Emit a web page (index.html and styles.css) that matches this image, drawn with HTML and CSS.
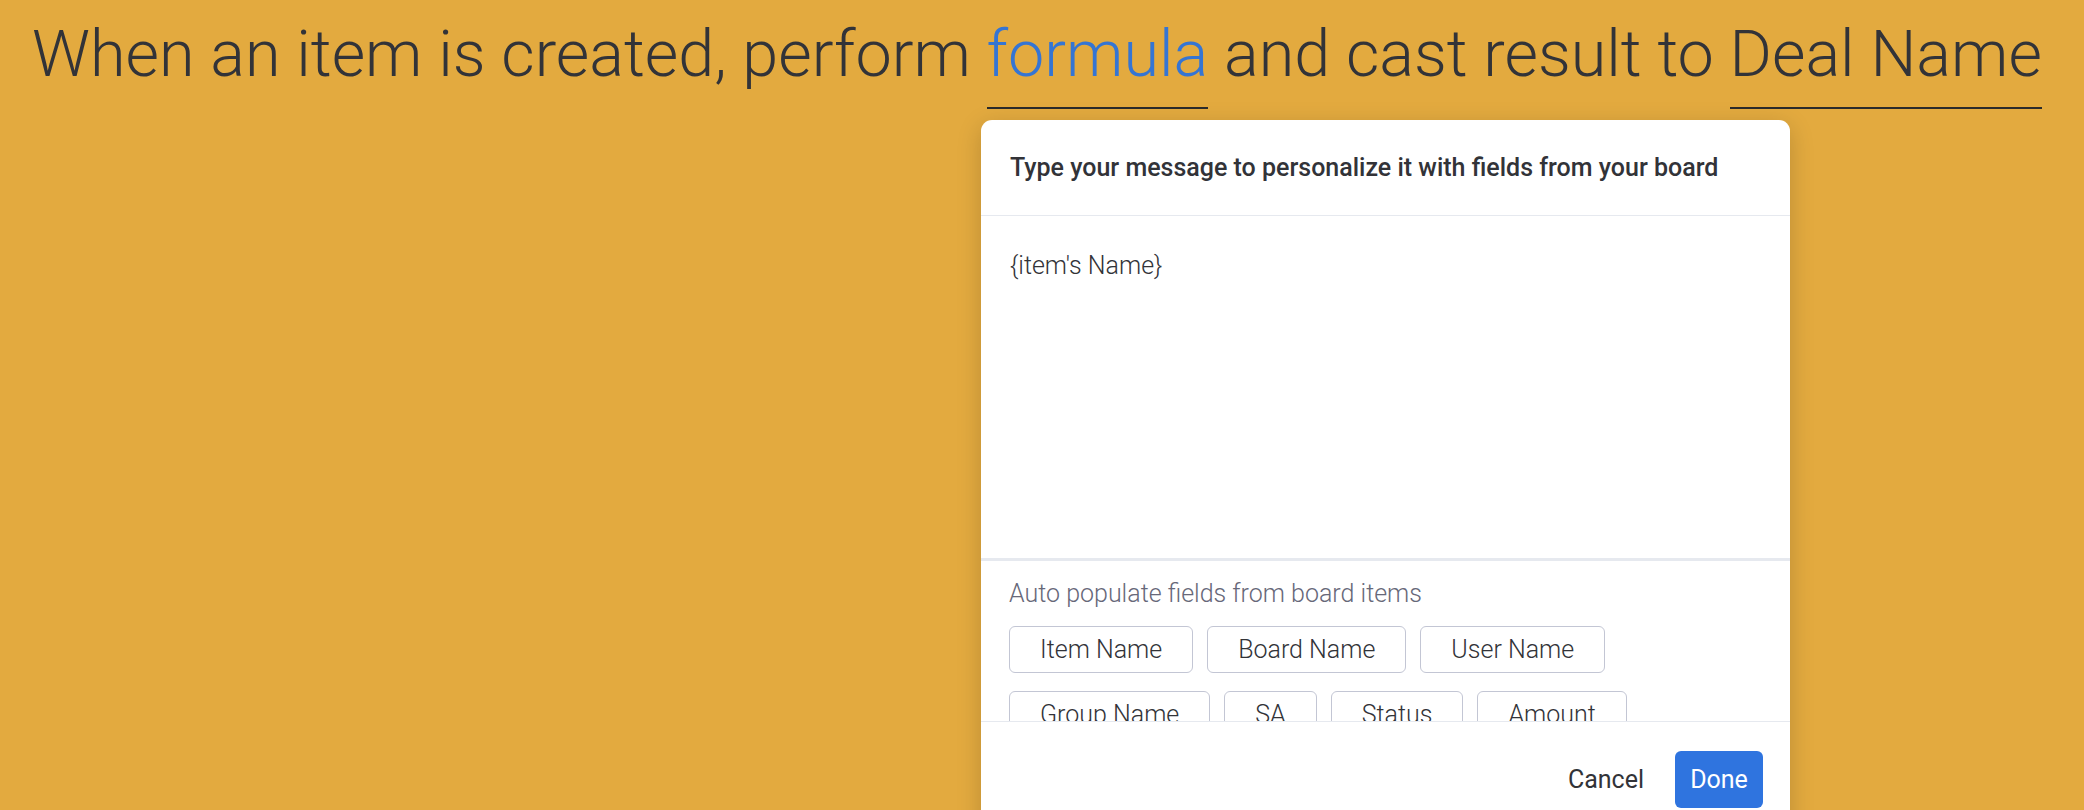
FILE: index.html
```html
<!DOCTYPE html>
<html>
<head>
<meta charset="utf-8">
<link rel="stylesheet" href="styles.css">
</head>
<body>
<div class="page">
  <p class="sentence">When an item is created, perform <span class="slot link">formula</span> and cast result to <span class="slot">Deal Name</span></p>
  <div class="modal">
    <div class="modal-header">Type your message to personalize it with fields from your board</div>
    <div class="modal-body">{item's Name}</div>
    <div class="modal-fields">
      <div class="fields-label">Auto populate fields from board items</div>
      <div class="chips">
        <div class="chip-row">
          <span class="chip">Item Name</span>
          <span class="chip">Board Name</span>
          <span class="chip">User Name</span>
        </div>
        <div class="chip-row">
          <span class="chip">Group Name</span>
          <span class="chip">SA</span>
          <span class="chip">Status</span>
          <span class="chip">Amount</span>
        </div>
      </div>
    </div>
    <div class="modal-footer">
      <button class="btn-cancel">Cancel</button>
      <button class="btn-done">Done</button>
    </div>
  </div>
</div>
</body>
</html>
```
FILE: styles.css
```css
html, body {
  margin: 0;
  padding: 0;
  height: 100%;
  overflow: hidden;
}
body {
  background: #e3aa3f;
  font-family: Roboto, "Liberation Sans", sans-serif;
  color: #323338;
}
.page {
  position: relative;
  height: 810px;
}
.sentence {
  margin: 0;
  padding: 16px 0 0 32px;
  font-size: 64.7px;
  font-weight: 300;
  line-height: 76px;
  white-space: nowrap;
  color: #323338;
}
.slot {
  display: inline-block;
  border-bottom: 2px solid #2b2b2b;
  padding-bottom: 15px;
  line-height: 76px;
}
.link {
  color: #3575d3;
}
.modal {
  position: absolute;
  left: 981px;
  top: 120px;
  width: 809px;
  height: 740px;
  background: #ffffff;
  border-radius: 11px;
  box-shadow: 0 6px 24px rgba(0, 0, 0, 0.18);
  display: flex;
  flex-direction: column;
  overflow: hidden;
}
.modal-header {
  height: 96px;
  flex: none;
  box-sizing: border-box;
  padding: 0 29px;
  display: flex;
  align-items: center;
  font-size: 25px;
  font-weight: 500;
  color: #323338;
  border-bottom: 1px solid #e6e9ef;
}
.modal-body {
  height: 345px;
  flex: none;
  box-sizing: border-box;
  padding: 35px 29px 0;
  font-size: 25px;
  font-weight: 300;
  line-height: 30px;
  color: #323338;
  border-bottom: 3px solid #e6e9ef;
}
.modal-fields {
  height: 160px;
  flex: none;
  box-sizing: border-box;
  padding: 18px 29px 0 28px;
  overflow: hidden;
}
.fields-label {
  font-size: 25px;
  font-weight: 300;
  color: #676879;
  line-height: 30px;
}
.chips {
  display: flex;
  flex-direction: column;
  gap: 18px;
  margin-top: 17px;
}
.chip-row {
  display: flex;
  gap: 14px;
}
.chip {
  box-sizing: border-box;
  height: 47px;
  border: 1px solid #c3c6d4;
  border-radius: 6px;
  padding: 0 30px;
  display: flex;
  align-items: center;
  font-size: 25px;
  font-weight: 300;
  color: #323338;
}
.modal-footer {
  border-top: 1px solid #e6e9ef;
  display: flex;
  justify-content: flex-end;
  align-items: flex-start;
  gap: 15px;
  padding: 29px 27px 0;
  flex: 1;
}
.btn-cancel, .btn-done {
  font-family: Roboto, "Liberation Sans", sans-serif;
  font-size: 25px;
  font-weight: 400;
  height: 57px;
  border: none;
  border-radius: 6px;
  padding: 0 16px;
  cursor: pointer;
}
.btn-cancel {
  background: transparent;
  color: #323338;
}
.btn-done {
  background: #2f74df;
  color: #ffffff;
  width: 88px;
  padding: 0;
}
```
